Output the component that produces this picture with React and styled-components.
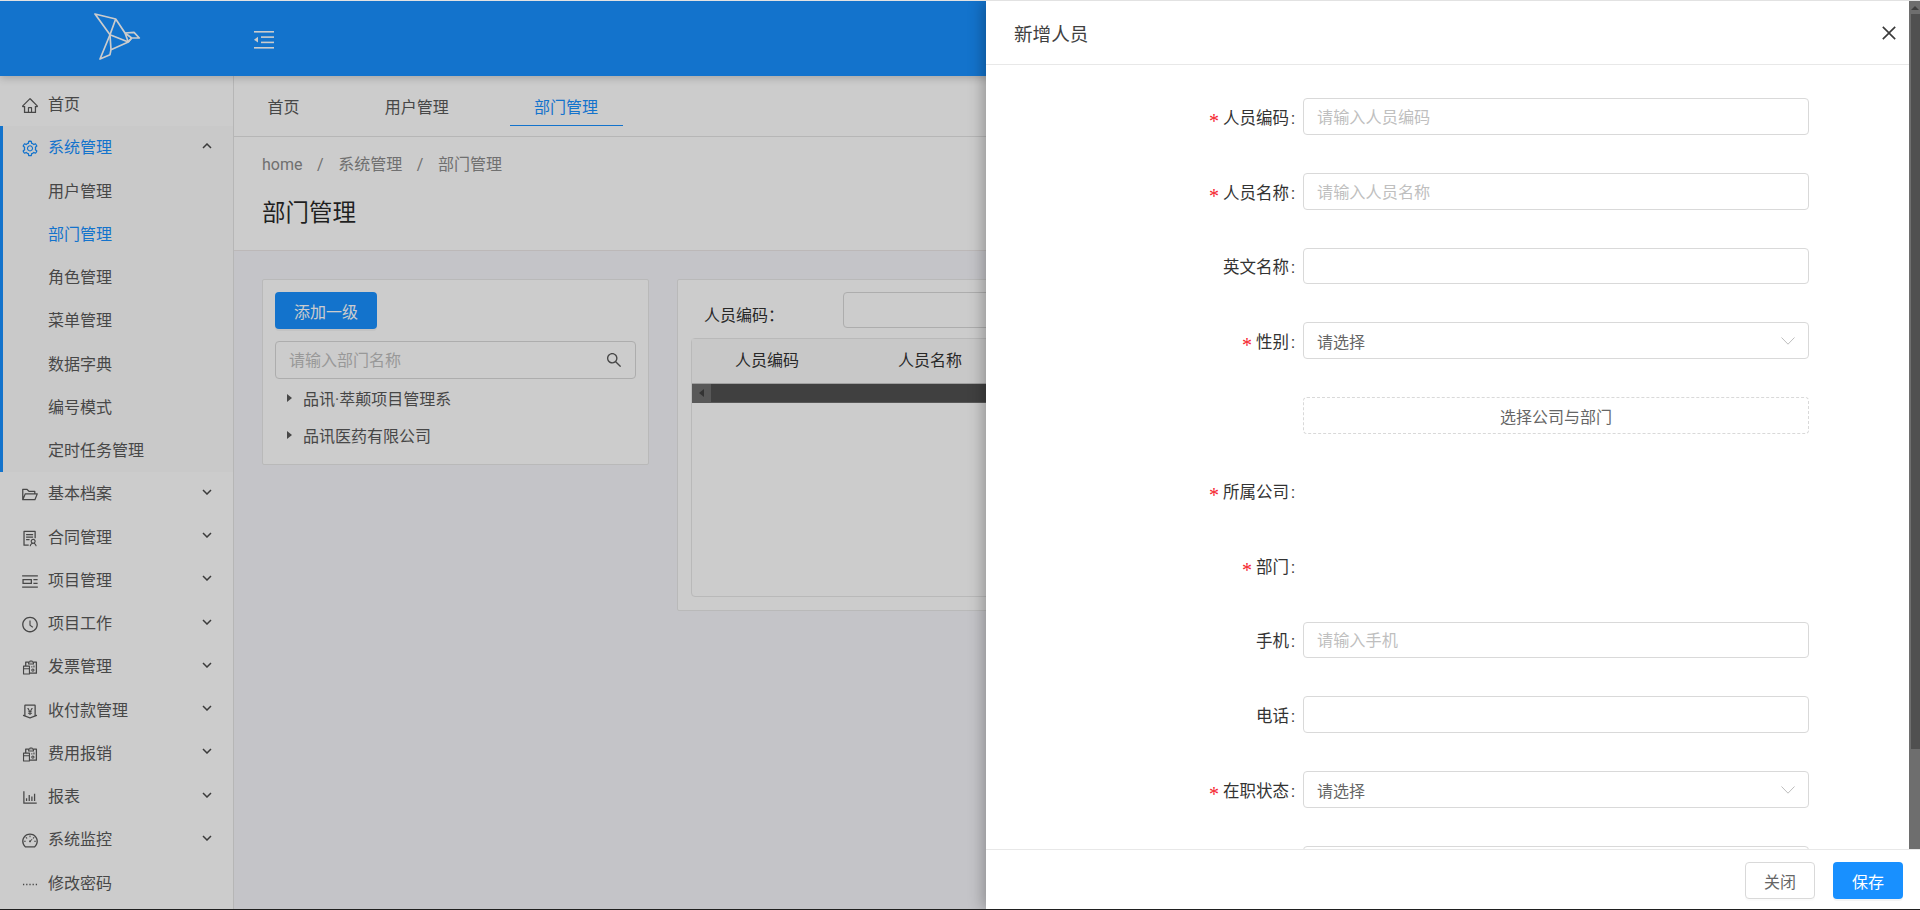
import React from "react";
import styled, { createGlobalStyle } from "styled-components";
import {
  AiOutlineHome, AiOutlineSetting, AiOutlineFolderOpen, AiOutlineSolution, AiOutlinePicLeft,
  AiOutlineClockCircle, AiOutlineReconciliation, AiOutlineMoneyCollect, AiOutlineBarChart,
  AiOutlineDashboard, AiOutlineSmallDash, AiOutlineSearch, AiOutlineClose,
} from "react-icons/ai";

const Global = createGlobalStyle`
  html, body { margin: 0; padding: 0; height: 100%; overflow: hidden; background: #fff; }
  * { box-sizing: border-box; }
  body, input, button { font-family: Roboto, "Noto Sans CJK SC", sans-serif; font-size: 16px; }
  input::placeholder { color: #bfbfbf; opacity: 1; }
`;

const Frame = styled.div`
  position: relative; height: 910px; width: 1920px; overflow: hidden;
  border-top: 1px solid #e2e2e2; border-bottom: 1px solid #1f1f1f;
  display: flex; flex-direction: column; background: #fff;
`;
const TopBar = styled.header`
  height: 75px; flex: none; background: #1890ff; display: flex; align-items: center;
  padding-left: 94px; position: relative; z-index: 2; box-shadow: 0 2px 8px rgba(0,0,0,.2);
`;
const Logo = styled.svg`width: 48px; height: 50px; flex: none; margin-top: -1px;`;
const FoldIcon = styled.svg`width: 20px; height: 18px; flex: none; margin-left: 112px; margin-top: 2px;`;
const Page = styled.div`flex: 1; min-height: 0; display: flex;`;

const Sider = styled.nav`
  width: 234px; flex: none; padding-top: 6.5px; background: #fff; border-right: 1px solid #e4e4e4; color: #595959;
`;
const OpenGroup = styled.div`background: #fcfcfc; box-shadow: inset 3px 0 0 #1890ff;`;
const MenuItem = styled.div`
  height: 43.25px; display: flex; align-items: center; padding: 2px 21px 0; position: relative;
  color: ${p => (p.$active ? "#1890ff" : "#595959")}; line-height: 24px;
`;
const MenuIcon = styled.span`width: 18px; height: 18px; margin-right: 9px; display: flex; flex: none; font-size: 19px;`;
const SubItem = styled(MenuItem)`padding-left: 48px;`;
const MenuText = styled.span`flex: 1;`;
const Chevron = styled.svg`
  width: 10px; height: 6px; flex: none; margin-top: -5px;
  transform: ${p => (p.$up ? "rotate(180deg)" : "none")};
`;

const Main = styled.main`flex: 1; min-width: 0; display: flex; flex-direction: column; background: #f5f6fa;`;
const TabBar = styled.div`
  height: 61px; flex: none; display: flex; align-items: flex-start; gap: 36.25px; padding: 14px 0 0 9px;
  background: #fff; border-bottom: 1px solid #e4e4e4;
`;
const Tab = styled.div`
  height: 36px; line-height: 36px; padding: 0 24.5px; color: ${p => (p.$active ? "#1890ff" : "#595959")};
  border-bottom: 1px solid ${p => (p.$active ? "#1890ff" : "transparent")};
`;
const PageHead = styled.section`
  flex: none; height: 114px; background: #fff; border-bottom: 1px solid #ebe6e6; padding: 16px 0 0 28px;
`;
const Crumbs = styled.div`display: flex; gap: 14.6px; line-height: 24px; color: #8c8c8c;`;
const Title = styled.h1`margin: 18px 0 0; font-size: 23.5px; font-weight: 400; line-height: 36px; color: rgba(0,0,0,.85);`;
const Content = styled.div`flex: 1; display: flex; gap: 28px; padding: 28px 0 0 28px; align-items: flex-start;`;

const TreeCard = styled.section`
  width: 387px; height: 186px; flex: none; background: #fff; border: 1px solid #e8e8e8; border-radius: 2px;
  padding: 12px 12px 0 12px;
`;
const PrimaryButton = styled.button`
  width: ${p => p.$w}px; height: 37px; border: 0; border-radius: 4px; background: #1890ff; color: #fff; padding: 0;
  box-shadow: 0 2px 0 rgba(0,0,0,.045); display: block;
`;
const SearchBox = styled.div`
  margin-top: 12px; height: 38px; border: 1px solid #d9d9d9; border-radius: 4px; display: flex; align-items: center;
  padding: 0 12px 0 13px; background: #fff;
`;
const BareInput = styled.input`flex: 1; min-width: 0; border: 0; outline: 0; padding: 0; background: transparent; color: #595959;`;
const TreeRow = styled.div`height: 37.5px; display: flex; align-items: center; padding-left: 12px; color: #595959;`;
const Caret = styled.i`
  width: 0; height: 0; margin-right: 11px; border-style: solid; border-width: 4px 0 4px 5px;
  border-color: transparent transparent transparent #595959;
`;
const TreeList = styled.div``;

const ListCard = styled.section`
  flex: 1; min-width: 0; height: 332px; background: #fff; border: 1px solid #e8e8e8; border-radius: 2px; padding: 12px 13px;
`;
const Filter = styled.div`display: flex; height: 36px; color: #333;`;
const FilterLabel = styled.label`width: 152px; flex: none; padding: 12px 0 0 13px; line-height: 24px;`;
const FilterInput = styled.input`
  flex: 1; min-width: 0; height: 36px; border: 1px solid #d9d9d9; border-radius: 4px; background: #fff; outline: 0;
`;
const TableBox = styled.div`margin-top: 10px; height: 259px; border: 1px solid #e8e8e8; border-radius: 4px;`;
const TableHead = styled.div`
  height: 44px; display: grid; grid-template-columns: 150px 150px; column-gap: 13px; align-items: center;
  text-align: center; background: #fafafa; color: #333; line-height: 24px;
`;
const HScroll = styled.div`height: 20px; display: flex; background: #6e6e6e; border-top: 1px solid #c8c8c8; padding-bottom: 1px;`;
const HArrow = styled.div`width: 19px; flex: none; display: flex; align-items: center; justify-content: center;`;
const ArrowLeft = styled.i`
  width: 0; height: 0; border-style: solid; border-width: 4px 5px 4px 0;
  border-color: transparent #404040 transparent transparent;
`;
const HThumb = styled.div`flex: 1; background: #505050;`;

const Mask = styled.div`position: absolute; inset: 0; background: rgba(0,0,0,.2); z-index: 5;`;
const Drawer = styled.aside`
  position: absolute; top: 0; bottom: 0; left: 986px; right: 0; z-index: 6; background: #fff; display: flex; flex-direction: column;
  box-shadow: -3px 0 14px rgba(0,0,0,.28);
`;
const DrawerTop = styled.div`flex: 1; min-height: 0; display: flex;`;
const DrawerBody = styled.div`flex: 1; min-width: 0; overflow: hidden;`;
const DrawerHead = styled.div`
  height: 64px; display: flex; align-items: center; justify-content: space-between; padding: 0 10px 0 28px;
  border-bottom: 1px solid #e8e8e8; font-size: 18.6px; color: #404040;
`;
const CloseBtn = styled.span`display: flex; font-size: 20px; color: #3a3a3a;`;
const VScroll = styled.div`width: 11px; flex: none; background: #6e6e6e; display: flex; flex-direction: column;`;
const VArrow = styled.div`height: 13px; flex: none; display: flex; align-items: center; justify-content: center;`;
const ArrowUp = styled.i`
  width: 0; height: 0; border-style: solid; border-width: 0 4px 4px 4px;
  border-color: transparent transparent #404040 transparent;
`;
const VThumb = styled.div`height: 735px; margin-left: 2px; background: #505050;`;
const Form = styled.form`padding-top: 33px;`;
const Row = styled.div`display: grid; grid-template-columns: 317px 506px; height: 36.8px; margin-bottom: 38px;`;
const Label = styled.label`
  display: flex; justify-content: flex-end; align-items: center; color: #333; line-height: 24px; font-size: 16.5px; padding-top: 5px;
  ${p => (p.$empty ? "" : `&::after { content: ":"; margin: 0 8px 0 2px; }`)}
  ${p => p.$required ? `&::before { content: "*"; color: #f5222d; font-family: "Liberation Serif", serif; font-size: 20px; margin-right: 4px; position: relative; top: 2px; }` : ""}
`;
const TextInput = styled.input`
  width: 100%; height: 100%; border: 1px solid #d9d9d9; border-radius: 4px; padding: 2px 13px 0; outline: 0; color: #595959; background: #fff; font-size: 16.2px;
`;
const SelectBox = styled.div`
  height: 100%; border: 1px solid #d9d9d9; border-radius: 4px; display: flex; align-items: center; justify-content: space-between;
  padding: 1px 13px 0 13px; color: #666;
`;
const SelectArrow = styled.svg`width: 14px; height: 8px; flex: none;`;
const DashedButton = styled.button`
  width: 100%; height: 100%; border: 1px dashed #d9d9d9; border-radius: 4px; background: #fff; color: #666; padding: 0;
`;
const DrawerFoot = styled.div`
  height: 60px; flex: none; border-top: 1px solid #e8e8e8; display: flex; justify-content: flex-end; gap: 18px; padding: 12px 17px 0 0; background: #fff;
`;
const GhostButton = styled.button`
  width: 70px; height: 37px; border: 1px solid #d9d9d9; border-radius: 4px; background: #fff; color: #666; padding: 0;
  box-shadow: 0 2px 0 rgba(0,0,0,.015);
`;

const Chev = ({ up }) => (
  <Chevron $up={up} viewBox="0 0 10 6"><polyline points="1,1 5,5 9,1" fill="none" stroke="#4a4a4a" strokeWidth="1.5" /></Chevron>
);

const menus = [
  [AiOutlineFolderOpen, "基本档案"], [AiOutlineSolution, "合同管理"], [AiOutlinePicLeft, "项目管理"],
  [AiOutlineClockCircle, "项目工作"], [AiOutlineReconciliation, "发票管理"], [AiOutlineMoneyCollect, "收付款管理"],
  [AiOutlineReconciliation, "费用报销"], [AiOutlineBarChart, "报表"], [AiOutlineDashboard, "系统监控"],
];
const subs = ["用户管理", "部门管理", "角色管理", "菜单管理", "数据字典", "编号模式", "定时任务管理"];

const SelectField = () => (
  <SelectBox>
    请选择
    <SelectArrow viewBox="0 0 14 8"><polyline points="0.5,0.5 7,7.2 13.5,0.5" fill="none" stroke="#bdbdbd" strokeWidth="1" /></SelectArrow>
  </SelectBox>
);

export default function App() {
  return (
    <>
      <Global />
      <Frame>
        <TopBar>
          <Logo viewBox="0 0 48 50">
            <g fill="none" stroke="#fff" strokeWidth="1.7" strokeLinejoin="round">
              <polygon points="1,1 21.7,6 31,20 40,19.3 45.3,25 37.7,25 34.3,29 17,36.7 16,41.7 6,46 16,21.7" />
              <path d="M16,21.7 L21.7,6 M16,21.7 L34.3,29 M16,21.7 L17,36.7 M31,20 L34.3,29 M37.7,25 L34.3,29 M31,20 L37.7,25" />
            </g>
          </Logo>
          <FoldIcon viewBox="0 0 20 18">
            <g fill="#fff">
              <rect x="0" y="0" width="20" height="1.6" />
              <rect x="7" y="5.3" width="13" height="1.6" />
              <rect x="7" y="10.6" width="13" height="1.6" />
              <rect x="0" y="16" width="20" height="1.6" />
              <polygon points="0,8.7 4,5.8 4,11.6" />
            </g>
          </FoldIcon>
        </TopBar>
        <Page>
          <Sider>
            <MenuItem><MenuIcon><AiOutlineHome /></MenuIcon><MenuText>首页</MenuText></MenuItem>
            <OpenGroup>
              <MenuItem $active><MenuIcon><AiOutlineSetting /></MenuIcon><MenuText>系统管理</MenuText><Chev up /></MenuItem>
              {subs.map(s => <SubItem key={s} $active={s === "部门管理"}>{s}</SubItem>)}
            </OpenGroup>
            {menus.map(([Icon, t]) => (
              <MenuItem key={t}><MenuIcon><Icon /></MenuIcon><MenuText>{t}</MenuText><Chev /></MenuItem>
            ))}
            <MenuItem><MenuIcon><AiOutlineSmallDash /></MenuIcon><MenuText>修改密码</MenuText></MenuItem>
          </Sider>
          <Main>
            <TabBar>
              <Tab>首页</Tab>
              <Tab>用户管理</Tab>
              <Tab $active>部门管理</Tab>
            </TabBar>
            <PageHead>
              <Crumbs><span>home</span><span>/</span><span>系统管理</span><span>/</span><span>部门管理</span></Crumbs>
              <Title>部门管理</Title>
            </PageHead>
            <Content>
              <TreeCard>
                <PrimaryButton $w={102}>添加一级</PrimaryButton>
                <SearchBox>
                  <BareInput placeholder="请输入部门名称" />
                  <AiOutlineSearch size={18} color="#595959" />
                </SearchBox>
                <TreeList>
                  <TreeRow><Caret />品讯·萃颠项目管理系</TreeRow>
                  <TreeRow><Caret />品讯医药有限公司</TreeRow>
                </TreeList>
              </TreeCard>
              <ListCard>
                <Filter>
                  <FilterLabel>人员编码：</FilterLabel>
                  <FilterInput />
                </Filter>
                <TableBox>
                  <TableHead><span>人员编码</span><span>人员名称</span></TableHead>
                  <HScroll>
                    <HArrow><ArrowLeft /></HArrow>
                    <HThumb />
                  </HScroll>
                </TableBox>
              </ListCard>
            </Content>
          </Main>
        </Page>
        <Mask />
        <Drawer>
          <DrawerTop>
            <DrawerBody>
              <DrawerHead>新增人员<CloseBtn><AiOutlineClose /></CloseBtn></DrawerHead>
              <Form>
                <Row><Label $required>人员编码</Label><TextInput placeholder="请输入人员编码" /></Row>
                <Row><Label $required>人员名称</Label><TextInput placeholder="请输入人员名称" /></Row>
                <Row><Label>英文名称</Label><TextInput /></Row>
                <Row><Label $required>性别</Label><SelectField /></Row>
                <Row><Label $empty /><DashedButton type="button">选择公司与部门</DashedButton></Row>
                <Row><Label $required>所属公司</Label></Row>
                <Row><Label $required>部门</Label></Row>
                <Row><Label>手机</Label><TextInput placeholder="请输入手机" /></Row>
                <Row><Label>电话</Label><TextInput /></Row>
                <Row><Label $required>在职状态</Label><SelectField /></Row>
                <Row><Label $empty /><TextInput /></Row>
              </Form>
            </DrawerBody>
            <VScroll>
              <VArrow><ArrowUp /></VArrow>
              <VThumb />
            </VScroll>
          </DrawerTop>
          <DrawerFoot>
            <GhostButton type="button">关闭</GhostButton>
            <PrimaryButton type="button" $w={70}>保存</PrimaryButton>
          </DrawerFoot>
        </Drawer>
      </Frame>
    </>
  );
}
